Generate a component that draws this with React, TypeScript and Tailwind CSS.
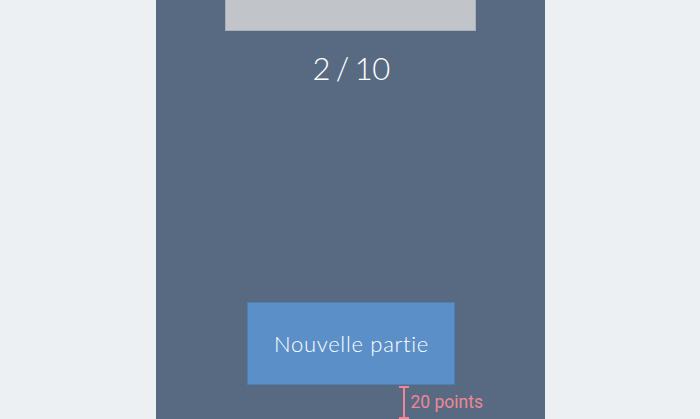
export default function App() {
  return (
    <div className="w-full h-[419px] bg-[#ecf0f3] flex justify-center overflow-hidden">
      <div className="relative w-[389px] h-full bg-[#576a82] flex flex-col items-center">
        <div className="w-[251px] h-[31px] bg-[#c1c5c9] border-b border-x border-[#a9b0b7]" />
        <div
          className="mt-[17px] ml-[2px] text-white text-[31px] leading-[40px] tracking-[-0.5px] font-light"
          style={{ fontFamily: "Lato, 'Open Sans', sans-serif", wordSpacing: "-2px" }}
        >
          2 / 10
        </div>
        <div className="mt-auto mb-[34px] ml-[1px] w-[208px] h-[83px] bg-[#5b8fc8] border border-[#4f7eb3] flex items-center justify-center">
          <span
            className="ml-[2px] text-white text-[22px] tracking-[0.7px] font-light"
            style={{ fontFamily: "Lato, 'Open Sans', sans-serif" }}
          >
            Nouvelle partie
          </span>
        </div>
        <div className="absolute left-[243px] top-[386px] w-[10px] h-[33px] flex flex-col items-center">
          <div className="w-[10px] h-[2px] bg-[#f08696]" />
          <div className="w-[2px] flex-1 bg-[#f08696]" />
          <div className="w-[10px] h-[2px] bg-[#f08696]" />
        </div>
        <div
          className="absolute left-[255px] top-[392px] text-[17.5px] leading-[20px] text-[#f08696]"
          style={{ fontFamily: "Roboto, 'Liberation Sans', sans-serif" }}
        >
          20 points
        </div>
      </div>
    </div>
  );
}
